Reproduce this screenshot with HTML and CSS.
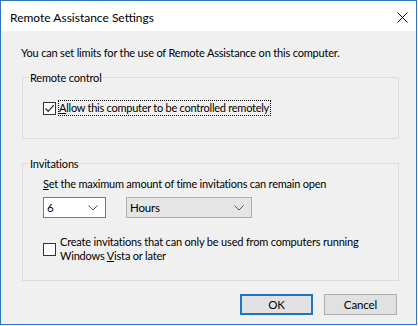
FILE: index.html
```html
<!DOCTYPE html>
<html lang="en">
<head>
<meta charset="utf-8">
<title>Remote Assistance Settings</title>
<link rel="stylesheet" href="styles.css">
</head>
<body>
<div class="window">
  <div class="titlebar">
    <span class="title">Remote Assistance Settings</span>
    <svg class="close" width="11" height="11" viewBox="0 0 11 11"><path d="M0.5 0.5 L10.5 10.5 M10.5 0.5 L0.5 10.5" stroke="#000" stroke-width="1" fill="none"/></svg>
  </div>
  <div class="content">
    <p class="intro">You can set limits for the use of Remote Assistance on this computer.</p>
    <fieldset class="group group-remote">
      <legend>Remote control</legend>
      <label class="check-row">
        <span class="checkbox"><svg width="11" height="11" viewBox="0 0 11 11"><path d="M1.5 5.5 L4.2 8.3 L9.8 2.2" stroke="#222" stroke-width="1.2" fill="none"/></svg></span>
        <span class="focus"><u>A</u>llow this computer to be controlled remotely</span>
      </label>
    </fieldset>
    <fieldset class="group group-inv">
      <legend>Invitations</legend>
      <p class="prompt"><u>S</u>et the maximum amount of time invitations can remain open</p>
      <div class="combos">
        <div class="combo combo-num"><span>6</span><svg width="10" height="6" viewBox="0 0 10 6"><path d="M0.5 0.5 L5 5 L9.5 0.5" stroke="#555" stroke-width="1" fill="none"/></svg></div>
        <div class="combo combo-unit"><span>Hours</span><svg width="10" height="6" viewBox="0 0 10 6"><path d="M0.5 0.5 L5 5 L9.5 0.5" stroke="#555" stroke-width="1" fill="none"/></svg></div>
      </div>
      <label class="check-row multi">
        <span class="checkbox"></span>
        <span class="label">Create invitations that can only be used from computers running<br>Windows <u>V</u>ista or later</span>
      </label>
    </fieldset>
    <div class="buttons">
      <button class="btn btn-default">OK</button>
      <button class="btn">Cancel</button>
    </div>
  </div>
</div>
</body>
</html>
```

FILE: styles.css
```css
html, body {
  margin: 0;
  padding: 0;
  background: #f4f6f8;
}

body {
  font-family: Lato, "Liberation Sans", sans-serif;
  font-size: 11px;
  letter-spacing: -0.18px;
  color: #000;
}

.window {
  width: 417px;
  height: 325px;
  box-sizing: border-box;
  border: 1px solid #2b78c0;
  background: #f0f0f0;
  display: flex;
  flex-direction: column;
  overflow: hidden;
}

.titlebar {
  height: 30px;
  flex: none;
  background: #fff;
  display: flex;
  align-items: center;
  justify-content: space-between;
  padding: 0 8px 0 9px;
}

.title {
  font-size: 12px;
  letter-spacing: 0;
  line-height: 15px;
  margin-top: 2px;
}

.close {
  display: block;
  margin-top: 2px;
}

.content {
  flex: 1;
  padding: 14px 0 0 20px;
}

.intro {
  margin: 0 0 10px 0;
  line-height: 15px;
  white-space: nowrap;
}

.group {
  margin: 0 0 0 1px;
  width: 377px;
  box-sizing: border-box;
  border: 1px solid #dcdcdc;
  padding: 0 0 0 6px;
  min-width: 0;
}

.group legend {
  padding: 0 1px;
  line-height: 15px;
}

.group-remote {
  padding-bottom: 22px;
}

.group-inv {
  margin-top: 17px;
  padding-bottom: 17px;
}

.check-row {
  display: flex;
  align-items: center;
  margin: 15px 0 0 14px;
}

.checkbox {
  width: 13px;
  height: 13px;
  box-sizing: border-box;
  border: 1px solid #333;
  background: #fff;
  flex: none;
  display: flex;
  align-items: center;
  justify-content: center;
  margin-right: 2px;
}

.checkbox svg {
  display: block;
}

.focus {
  border: 1px dotted #000;
  line-height: 14px;
  padding: 0 1px 0 0;
  white-space: nowrap;
  letter-spacing: -0.25px;
}

.prompt {
  margin: 5px 0 0 14px;
  line-height: 15px;
  white-space: nowrap;
  letter-spacing: -0.22px;
}

.combos {
  display: flex;
  margin: 6px 0 0 14px;
}

.combo {
  height: 21px;
  box-sizing: border-box;
  display: flex;
  align-items: center;
  justify-content: space-between;
  padding: 0 7px 0 3px;
  font-size: 11.5px;
  letter-spacing: -0.2px;
}

.combo svg {
  display: block;
}

.combo-num {
  width: 63px;
  background: #fff;
  border: 1px solid #7a7a7a;
}

.combo-unit {
  width: 126px;
  margin-left: 20px;
  background: #e5e5e5;
  border: 1px solid #adadad;
}

.check-row.multi {
  margin-top: 17px;
}

.check-row.multi .checkbox {
  margin-right: 4px;
  margin-top: 0;
}

.label {
  line-height: 14px;
  white-space: nowrap;
}

.buttons {
  display: flex;
  justify-content: flex-end;
  gap: 11px;
  margin-top: 13px;
  padding-right: 19px;
}

.btn {
  width: 73px;
  height: 21px;
  box-sizing: border-box;
  border: 1px solid #adadad;
  background: #e1e1e1;
  font-family: inherit;
  font-size: 11.5px;
  letter-spacing: -0.1px;
  color: #000;
  padding: 0;
  margin: 0;
}

.btn-default {
  border: 2px solid #1c75c8;
}
```
